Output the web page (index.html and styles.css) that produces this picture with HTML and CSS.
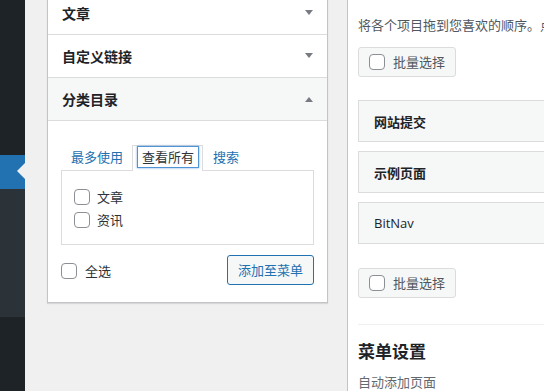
FILE: index.html
```html
<!DOCTYPE html>
<html>
<head>
	<title>菜单</title>
	<link rel="stylesheet" href="styles.css">
</head>
<body>
	<div class="sidebar">
		<div class="side-top"></div>
		<div class="side-current"><span class="side-arrow"></span></div>
		<div class="side-sub"></div>
		<div class="side-rest"></div>
	</div>
	<div class="wrap">
		<div class="accordion">
			<div class="acc-title">文章<span class="arrow-down"></span></div>
			<div class="acc-title">自定义链接<span class="arrow-down"></span></div>
			<div class="acc-title open">分类目录<span class="arrow-up"></span></div>
			<div class="acc-body">
				<div class="tabs">
					<div class="tab"><a class="tab-link">最多使用</a></div>
					<div class="tab active"><a class="tab-link focus">查看所有</a></div>
					<div class="tab"><a class="tab-link">搜索</a></div>
				</div>
				<div class="tab-panel">
					<div class="check-row"><span class="checkbox"></span><span class="check-label">文章</span></div>
					<div class="check-row"><span class="checkbox"></span><span class="check-label">资讯</span></div>
				</div>
				<div class="acc-actions">
					<div class="select-all"><span class="checkbox"></span><span class="check-label">全选</span></div>
					<button class="btn-add">添加至菜单</button>
				</div>
			</div>
		</div>
		<div class="menu-panel">
			<p class="menu-help">将各个项目拖到您喜欢的顺序。点击项目右侧的箭头可以显示更多设置选项。</p>
			<div class="bulk-btn"><span class="checkbox"></span>批量选择</div>
			<div class="menu-items">
				<div class="menu-item">网站提交</div>
				<div class="menu-item">示例页面</div>
				<div class="menu-item latin">BitNav</div>
			</div>
			<div class="bulk-btn bulk-bottom"><span class="checkbox"></span>批量选择</div>
			<div class="menu-settings">
				<h3>菜单设置</h3>
				<div class="setting-label">自动添加页面</div>
			</div>
		</div>
	</div>
</body>
</html>
```

FILE: styles.css
```css
body{
	margin: 0;
	height: 391px;
	overflow: hidden;
	display: flex;
	background: #f0f0f1;
	font-family: 'Open Sans', 'Noto Sans CJK SC', sans-serif;
	font-size: 13px;
	color: #2c3338;
}

/* admin sidebar */
.sidebar{
	width: 25px;
	flex-shrink: 0;
	display: flex;
	flex-direction: column;
	background: #1d2327;
}
.side-top{
	height: 155px;
}
.side-current{
	height: 34px;
	background: #2271b1;
	position: relative;
}
.side-arrow{
	position: absolute;
	right: 0;
	top: 8px;
	border-top: 8px solid transparent;
	border-bottom: 8px solid transparent;
	border-right: 8px solid #f0f0f1;
}
.side-sub{
	height: 128px;
	background: #2c3338;
}
.side-rest{
	flex: 1;
}

.wrap{
	flex: 1;
	display: flex;
	gap: 19px;
	padding-left: 22px;
	min-width: 0;
}

/* left accordion */
.accordion{
	width: 279px;
	flex-shrink: 0;
	margin-top: -9px;
	align-self: flex-start;
	background: white;
	border: 1px solid #c3c4c7;
	box-shadow: 0 1px 1px rgba(0,0,0,0.1);
}
.acc-title{
	display: flex;
	justify-content: space-between;
	align-items: center;
	height: 42px;
	padding: 0 14px 0 14px;
	border-bottom: 1px solid #dcdcde;
	font-size: 14px;
	font-weight: 600;
	color: #1d2327;
}
.acc-title.open{
	background: #f6f7f7;
}
.arrow-down{
	border-left: 4px solid transparent;
	border-right: 4px solid transparent;
	border-top: 5px solid #787c82;
	margin-top: -2px;
}
.arrow-up{
	border-left: 4px solid transparent;
	border-right: 4px solid transparent;
	border-bottom: 5px solid #787c82;
}
.acc-body{
	padding: 24px 13px 17px;
}
.tabs{
	display: flex;
}
.tab{
	padding: 1px 4px 4px 5px;
	border: 1px solid transparent;
	border-bottom: 0;
	margin-bottom: -1px;
	position: relative;
}
.tab.active{
	background: white;
	border-color: #dcdcde;
}
.tab-link{
	display: block;
	padding: 1px 4px;
	line-height: 18px;
	color: #2271b1;
}
.tab-link.focus{
	color: #2c3338;
	box-shadow: 0 0 0 1px #4f94d4, 0 0 2px 1px rgba(79,148,212,0.8);
}
.tab-panel{
	border: 1px solid #dcdcde;
	padding: 14px 12px 13px;
}
.check-row{
	display: flex;
	align-items: center;
	height: 23px;
}
.checkbox{
	width: 14px;
	height: 14px;
	border: 1px solid #8c8f94;
	border-radius: 4px;
	background: white;
	flex-shrink: 0;
}
.check-label{
	margin-left: 7px;
	line-height: 18px;
}
.acc-actions{
	margin-top: 10px;
	display: flex;
	justify-content: space-between;
	align-items: center;
}
.select-all{
	display: flex;
	align-items: center;
	margin-top: 2px;
}
.select-all .check-label{
	margin-left: 8px;
}
.btn-add{
	height: 30px;
	padding: 0 10px;
	border: 1px solid #2271b1;
	border-radius: 3px;
	background: #f6f7f7;
	color: #2271b1;
	font-family: inherit;
	font-size: 13px;
	line-height: 28px;
}

/* right menu structure */
.menu-panel{
	flex: 1;
	min-width: 0;
	background: white;
	border-left: 1px solid #c3c4c7;
	padding: 15px 0 0 10px;
	overflow: hidden;
}
.menu-help{
	margin: 0;
	line-height: 20px;
	white-space: nowrap;
	color: #50575e;
}
.bulk-btn{
	display: flex;
	align-items: center;
	width: 76px;
	height: 28px;
	margin-top: 12px;
	padding: 0 10px;
	border: 1px solid #dcdcde;
	border-radius: 3px;
	background: #f6f7f7;
	color: #50575e;
	line-height: 18px;
}
.bulk-btn .checkbox{
	margin-right: 8px;
}
.bulk-bottom{
	margin-top: 24px;
}
.menu-items{
	margin-top: 23px;
	display: flex;
	flex-direction: column;
	gap: 9px;
}
.menu-item{
	height: 40px;
	display: flex;
	align-items: center;
	padding-left: 15px;
	border: 1px solid #dcdcde;
	border-right: 0;
	background: #f6f7f7;
	font-weight: 600;
	color: #1d2327;
}
.menu-item.latin{
	font-weight: 500;
}
.menu-settings{
	margin-top: 26px;
	border-top: 1px solid #f0f0f1;
}
.menu-settings h3{
	margin: 15px 0 0;
	font-size: 17px;
	line-height: 24px;
	font-weight: 600;
	color: #1d2327;
}
.setting-label{
	margin-top: 8px;
	line-height: 20px;
	color: #646970;
}
```
